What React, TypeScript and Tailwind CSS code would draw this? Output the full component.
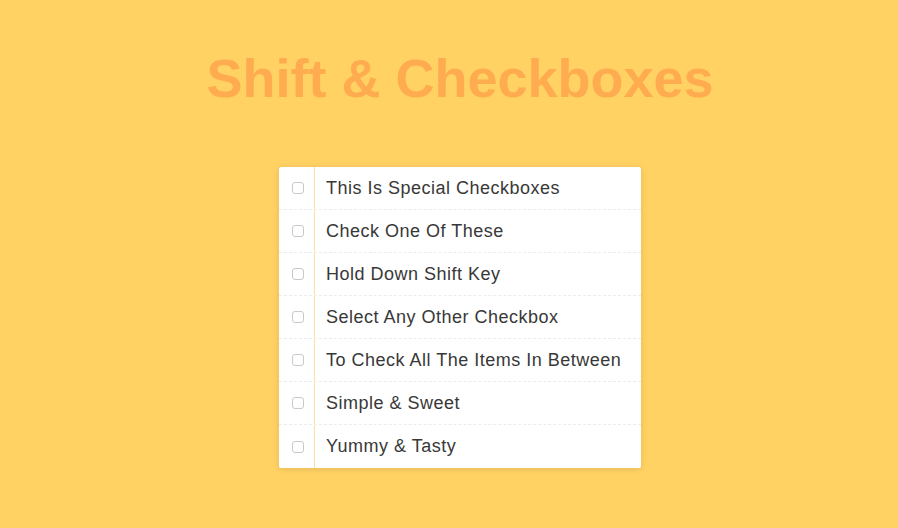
import React from "react";

const items = [
  "This Is Special Checkboxes",
  "Check One Of These",
  "Hold Down Shift Key",
  "Select Any Other Checkbox",
  "To Check All The Items In Between",
  "Simple & Sweet",
  "Yummy & Tasty",
];

export default function App() {
  return (
    <div
      className="w-[898px] h-[528px] bg-[#ffd263] flex flex-col items-center pl-[22px] overflow-hidden"
      style={{ fontFamily: '"Liberation Sans", Arial, sans-serif' }}
    >
      <h1 className="mt-[47px] text-[54px] leading-[62px] font-bold text-[#ffab4f] tracking-[0px]">
        Shift &amp; Checkboxes
      </h1>
      <div className="mt-[58px] w-[362px] bg-white rounded-[2px] shadow-[0_1px_6px_rgba(0,0,0,0.12)] flex flex-col">
        {items.map((t, i) => (
          <div
            key={i}
            className={`flex h-[43px] ${i < items.length - 1 ? "border-b border-dashed border-[#ececec]" : ""}`}
          >
            <div className="w-[36px] shrink-0 flex items-center justify-center border-r border-[#fde39f] pl-[2px]">
              <div className="w-[12px] h-[12px] rounded-[3px] border border-[#c9c9c9] bg-white" />
            </div>
            <div className="flex items-center pl-[11px] text-[18px] tracking-[0.5px] text-[#383838] font-light">
              {t}
            </div>
          </div>
        ))}
      </div>
    </div>
  );
}
